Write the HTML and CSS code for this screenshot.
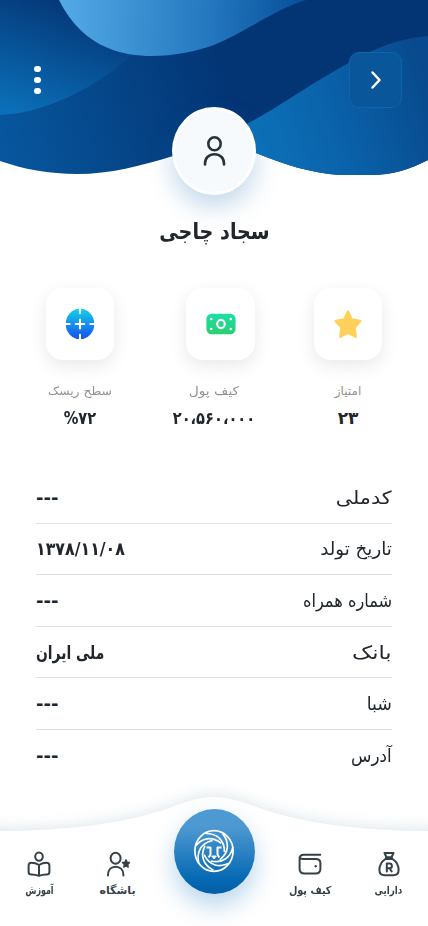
FILE: index.html
```html
<!DOCTYPE html>
<html lang="fa" dir="rtl">
<head>
<meta charset="utf-8">
<meta name="viewport" content="width=device-width, initial-scale=1">
<title>سجاد چاجی</title>
<link rel="stylesheet" href="styles.css">
</head>
<body>
<div class="screen">
  <header class="hero">
    <svg class="hero-art" viewBox="0 0 428 176" aria-hidden="true">
      <defs>
        <linearGradient id="base" gradientUnits="userSpaceOnUse" x1="0" y1="150" x2="225" y2="85"><stop offset="0" stop-color="#07579f"/><stop offset=".5" stop-color="#054689"/><stop offset="1" stop-color="#033575"/></linearGradient>
        <linearGradient id="left" gradientUnits="userSpaceOnUse" x1="70" y1="0" x2="25" y2="118"><stop offset="0" stop-color="#043676"/><stop offset="1" stop-color="#0b70b9"/></linearGradient>
        <linearGradient id="top" gradientUnits="userSpaceOnUse" x1="62" y1="0" x2="300" y2="10"><stop offset="0" stop-color="#53a9e6"/><stop offset=".62" stop-color="#2478bf"/><stop offset="1" stop-color="#07519b"/></linearGradient>
        <linearGradient id="right" gradientUnits="userSpaceOnUse" x1="255" y1="140" x2="428" y2="85"><stop offset="0" stop-color="#0c71b8"/><stop offset=".5" stop-color="#0a60a8"/><stop offset="1" stop-color="#084a8d"/></linearGradient>
        <clipPath id="wave"><path d="M0 0H428V160C410 169 393 175 370 175H340C310 173 283 164 256 153C230 142 200 147 173 156C140 166 111 174 77 174C49 174 23 169 0 161Z"/></clipPath>
      </defs>
      <g clip-path="url(#wave)">
        <path fill="url(#base)" d="M0 0H428V176H0Z"/>
        <path fill="url(#left)" d="M0 0H170L134 54C94 88 47 113 0 115Z"/>
        <path fill="url(#right)" d="M428 36C390 39 362 55 333 72C301 90 269 114 238 128L225 176H428Z"/>
        <path fill="url(#top)" d="M59 0C71 24 88 40 108 48C139 61 180 57 214 45C246 32 277 8 306 0Z"/>
      </g>
    </svg>
    <div class="toolbar">
      <button class="back" aria-label="بازگشت"><svg viewBox="0 0 24 24"><path d="m8.5 4.5 7 7.5-7 7.5"/></svg></button>
      <button class="more" aria-label="بیشتر"><i></i><i></i><i></i></button>
    </div>
    <div class="avatar"><svg viewBox="0 0 26 34"><ellipse cx="13.5" cy="9.8" rx="6.2" ry="6.5"/><path d="M4 30.5v-1c0-5.5 4-9.3 9.5-9.3s9.5 3.8 9.5 9.3v1"/></svg></div>
  </header>
  <h1 class="name"><span>سجاد چاجی</span></h1>

  <section class="stats">
    <div class="stat score">
      <div class="tile"><svg width="30" height="30" viewBox="0 0 30 30"><path d="M15 2.5 18.9 10.4 27.5 11.9 21.6 18.5 22.8 27.8 15 24 7.2 27.8 8.4 18.5 2.5 11.9 11.1 10.4Z" fill="#ffd15a" stroke="#ffd15a" stroke-width="2.2" stroke-linejoin="round"/></svg></div>
      <div class="label"><span>امتیاز</span></div><div class="value"><span>۲۳</span></div>
    </div>
    <div class="stat wallet">
      <div class="tile"><svg width="30" height="22" viewBox="0 0 30 22"><defs><linearGradient id="cash" x2="0" y2="1"><stop stop-color="#1ddda7"/><stop offset="1" stop-color="#2bcf70"/></linearGradient></defs><rect x=".4" y=".7" width="29.2" height="20.6" rx="5.2" fill="url(#cash)"/><ellipse cx="15" cy="11" rx="3.8" ry="4.1" fill="none" stroke="#fff" stroke-width="2.1"/><g fill="#fff"><circle cx="5.2" cy="6" r="1.3"/><circle cx="24.8" cy="6" r="1.3"/><circle cx="5.2" cy="16" r="1.3"/><circle cx="24.8" cy="16" r="1.3"/></g></svg></div>
      <div class="label"><span>کیف پول</span></div><div class="value"><span>۲۰،۵۶۰،۰۰۰</span></div>
    </div>
    <div class="stat risk">
      <div class="tile"><svg width="30" height="32" viewBox="0 0 30 32"><defs><linearGradient id="aim" x2="0" y2="1"><stop stop-color="#14d1e9"/><stop offset="1" stop-color="#174eef"/></linearGradient></defs><ellipse cx="15" cy="16" rx="14.3" ry="15.3" fill="url(#aim)"/><path d="M15 0v5.1M15 26.9V32M0 16h4.7M25.3 16H30M10.8 16h8.4M15 11.6v8.8" fill="none" stroke="#fff" stroke-width="2.1" stroke-linecap="round"/></svg></div>
      <div class="label"><span>سطح ریسک</span></div><div class="value"><span dir="ltr">%۷۲</span></div>
    </div>
  </section>

  <dl class="details">
    <div class="row"><dt><span class="k1">کدملی</span></dt><dd>---</dd></div>
    <div class="row"><dt><span class="k2">تاریخ تولد</span></dt><dd><span class="date">۱۳۷۸/۱۱/۰۸</span></dd></div>
    <div class="row"><dt><span class="k3">شماره همراه</span></dt><dd>---</dd></div>
    <div class="row"><dt><span class="k4">بانک</span></dt><dd><span class="bank">ملی ایران</span></dd></div>
    <div class="row"><dt><span class="k5">شبا</span></dt><dd>---</dd></div>
    <div class="row"><dt><span class="k6">آدرس</span></dt><dd>---</dd></div>
  </dl>

  <nav class="nav">
    <svg class="nav-bg" viewBox="0 0 428 156" aria-hidden="true">
      <defs><filter id="soft" x="-20%" y="-30%" width="140%" height="160%"><feGaussianBlur stdDeviation="8"/></filter></defs>
      <path d="M-30 60H0C62 60 119 54 160 41C181 34 195 26 214 26S247 34 268 41C309 54 366 60 428 60H460V180H-30Z" fill="#c9d9df" opacity=".72" filter="url(#soft)"/>
      <path d="M0 61C62 61 119 54 160 41C181 34 195 27 214 27S247 34 268 41C309 54 366 61 428 61V156H0Z" fill="#fff"/>
    </svg>
    <div class="nav-items">
      <a class="item assets"><svg viewBox="0 0 24 26"><path d="M7.5 2h9l-2 4.2h-5ZM8.8 8h6.4M9.3 6.5 8.4 8C4.5 10.6 2.4 14.5 2.4 19c0 3.6 2 5.2 5.3 5.2h8.6c3.3 0 5.3-1.6 5.3-5.2 0-4.5-2.1-8.4-6-11l-.9-1.5"/><path d="M9.8 20.5v-8h2.7a2.4 2.4 0 0 1 0 4.8H9.8m2.7 0 2.2 3.2"/></svg><span>دارایی</span></a>
      <a class="item purse"><svg viewBox="0 0 24 26"><path d="M22.3 3.7H5.8C3.2 3.7 1.6 5.3 1.6 8v9.8c0 3 1.6 4.8 4.8 4.8h11.2c3.2 0 4.8-1.8 4.8-4.8V12c0-3-1.6-4.1-4.8-4.1H5.3c-2.3 0-3.7-.8-3.7-1.6"/><circle cx="17.6" cy="15.2" r=".8" fill="#354047" stroke-width="1"/></svg><span>کیف پول</span></a>
      <a class="home" aria-label="خانه"><svg viewBox="0 0 42 44"><defs><path id="mane" d="M13 4.5C23 4.5 31.5 10 31.5 23"/></defs><ellipse cx="21" cy="22" rx="19.1" ry="20.3"/><use href="#mane"/><use href="#mane" transform="rotate(51.4 21 22)"/><use href="#mane" transform="rotate(102.9 21 22)"/><use href="#mane" transform="rotate(154.3 21 22)"/><use href="#mane" transform="rotate(205.7 21 22)"/><use href="#mane" transform="rotate(257.1 21 22)"/><use href="#mane" transform="rotate(308.6 21 22)"/><path class="face" d="M13.5 18.5h4v7l-1.8 3M28.5 18.5h-4v7l1.8 3"/><path class="nose" d="M18.7 27h4.6L21 30Z"/></svg></a>
      <a class="item club"><svg viewBox="0 0 24 26"><ellipse cx="9.6" cy="7.2" rx="5" ry="5.5"/><path d="M2 24.5v-.7c0-4.9 3-8.1 7.6-8.1s7.8 3.2 7.8 8.1v.7"/><path d="m20 8.8 1.1 2.3 2.5.4-1.8 1.9.4 2.7-2.2-1.2-2.2 1.2.4-2.7-1.8-1.9 2.5-.4Z" fill="#354047" stroke-width="1.3"/></svg><span>باشگاه</span></a>
      <a class="item learn"><svg viewBox="0 0 24 26"><ellipse cx="12" cy="5.6" rx="3.8" ry="4.1"/><path d="M12 14c-2.7-1.7-5.2-2.2-7.6-2.2-1.8 0-2.8 1-2.8 2.8v6.3c0 1.8 1 2.5 2.8 2.5 2.7 0 5.1.2 7.6 1.4 2.5-1.2 4.9-1.4 7.6-1.4 1.8 0 2.8-.7 2.8-2.5v-6.3c0-1.8-1-2.8-2.8-2.8-2.4 0-4.9.5-7.6 2.2ZM12 14v10"/></svg><span>آموزش</span></a>
    </div>
  </nav>
</div>
</body>
</html>
```
FILE: styles.css
```css
* { box-sizing: border-box; }
body { margin: 0; background: #fff; color: #20262c; font-family: "DejaVu Sans", sans-serif; }
.screen { width: 428px; height: 926px; overflow: hidden; display: flex; flex-direction: column; background: #fff; }
button { padding: 0; border: 0; background: none; }
span { display: inline-block; white-space: nowrap; }
svg { display: block; flex: none; }
.hero { position: relative; height: 176px; flex: none; }
.hero-art { position: absolute; inset: 0; width: 428px; height: 176px; }
.toolbar { position: relative; display: flex; justify-content: space-between; align-items: center; padding: 52px 26px 0 32px; }
.back { width: 53px; height: 56px; border: 1.5px solid #0e65ad; border-radius: 10px; background: #09569b; display: grid; place-items: center; }
.back svg { width: 24px; height: 24px; fill: none; stroke: #fff; stroke-width: 2.5; stroke-linecap: round; stroke-linejoin: round; }
.more { width: 11px; display: flex; flex-direction: column; align-items: center; gap: 4.3px; }
.more i { width: 6.5px; height: 6.5px; border-radius: 50%; background: #fff; }
.avatar { position: absolute; left: 172px; top: 107px; width: 84px; height: 88px; border: 3px solid #fff; border-radius: 50%; background: #f6fafc; box-shadow: 0 12px 24px rgba(20, 105, 175, .25); display: grid; place-items: center; }
.avatar svg { width: 26px; height: 34px; fill: none; stroke: #26343a; stroke-width: 2.6; stroke-linecap: round; }
.name { margin: 38px 0 0; height: 36px; font-size: 22px; line-height: 36px; font-weight: 700; text-align: center; }
.name span { transform: scaleX(.87); }
.stats { height: 150px; margin: 38px 46px 0; display: flex; justify-content: space-between; }
.stat { width: 68px; display: flex; flex-direction: column; align-items: center; }
.stat.wallet { width: 69px; margin-left: 13px; }
.tile { width: 100%; height: 72px; border-radius: 17px; background: #fff; box-shadow: 0 6px 18px rgba(0, 0, 0, .09); display: grid; place-items: center; flex: none; }
.label { margin-top: 20px; height: 22px; line-height: 22px; font-size: 12px; color: #929292; }
.value { height: 30px; line-height: 32px; font-size: 17px; font-weight: 700; }
.wallet .label, .wallet .value { margin-right: 14px; }
.wallet .label span { transform: scaleX(1.15); }
.wallet .value span { transform: scaleX(.86); }
.risk .label span { transform: scaleX(1.03); }
.risk .value span { transform: scaleX(.86); }
.details { margin: 34px 36px 0; }
.row { height: 51.6px; display: flex; justify-content: space-between; align-items: center; border-bottom: 1.5px solid #dbe5e9; }
.row:last-child { border: 0; }
dt { font-size: 18px; }
dt span { transform-origin: right; }
.k1 { transform: scaleX(1.15); }
.k2 { transform: scaleX(1.01); }
.k3 { transform: scaleX(.9); }
.k4 { transform: scaleX(1.25); }
.k5 { transform: scaleX(.97); }
.k6 { transform: scaleX(.93); }
dd { margin: 0; font-size: 18px; font-weight: 700; }
dd span { transform-origin: left; }
.date { transform: scaleX(.88); }
.bank { transform: scaleX(.77); }
.nav { position: relative; height: 156px; flex: none; margin-top: -12px; }
.nav-bg { position: absolute; inset: 0; width: 428px; height: 156px; }
.nav-items { position: relative; height: 100%; display: grid; grid-template-columns: 79px 78px 114px 79px 78px; align-items: start; }
.item { padding-top: 81px; display: flex; flex-direction: column; align-items: center; font-size: 11px; font-weight: 700; color: #354047; }
.item svg { width: 24px; height: 26px; fill: none; stroke: #354047; stroke-width: 2; stroke-linecap: round; stroke-linejoin: round; }
.item span { line-height: 22px; margin-top: 3px; }
.assets span { transform: scaleX(.8); }
.purse span { transform: scaleX(.88); }
.learn span { transform: scaleX(.72); }
.home { justify-self: center; margin-top: 39px; width: 81px; height: 85px; border-radius: 50%; background: linear-gradient(#4e99d2 20%, #2c82c3 50%, #0569b3 82%, #045da6); box-shadow: 0 12px 25px rgba(20, 120, 195, .3); display: grid; place-items: center; }
.home svg { width: 42px; height: 44px; fill: none; stroke: #fff; stroke-width: 1.7; stroke-linejoin: round; }
.home .face { stroke-width: 2; }
.home .nose { fill: #fff; stroke-width: 1; }
```
